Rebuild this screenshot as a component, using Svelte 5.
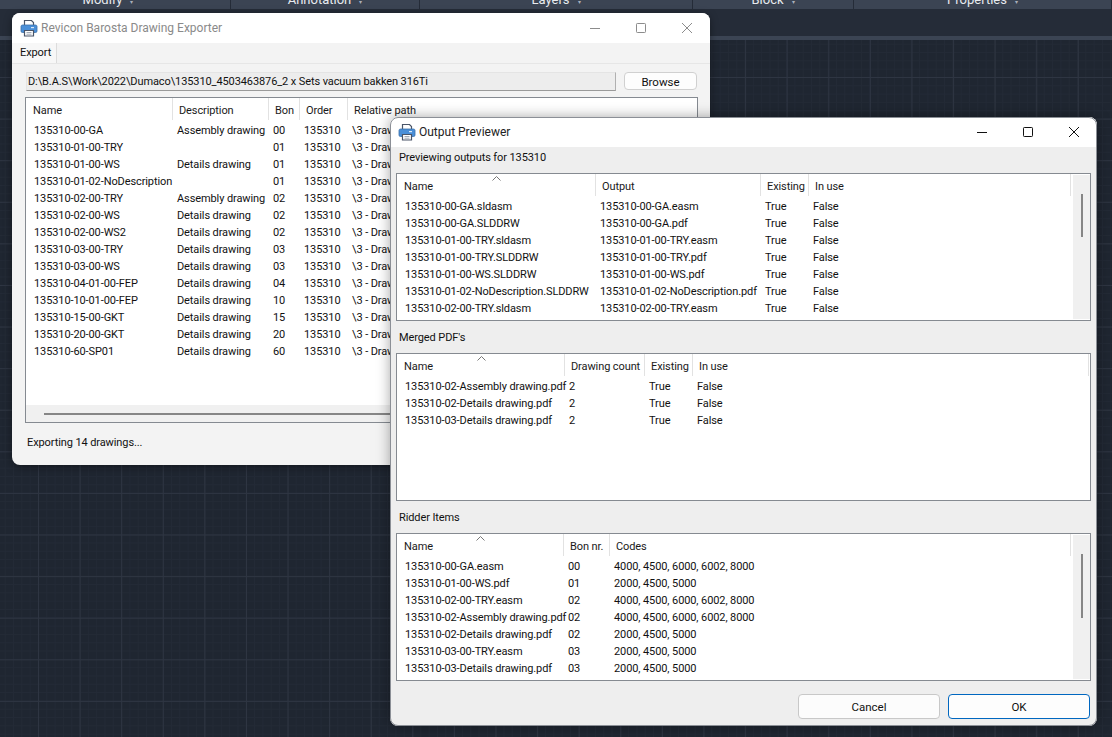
<script lang="ts">
  type Col = { title: string; width: number };

  const exportCols: Col[] = [
    { title: 'Name', width: 146 },
    { title: 'Description', width: 96 },
    { title: 'Bon', width: 31 },
    { title: 'Order', width: 48 },
    { title: 'Relative path', width: 420 },
  ];
  const dr = '\\3 - Drawings';
  const exportRows = [
    ['135310-00-GA', 'Assembly drawing', '00', '135310', dr],
    ['135310-01-00-TRY', '', '01', '135310', dr],
    ['135310-01-00-WS', 'Details drawing', '01', '135310', dr],
    ['135310-01-02-NoDescription', '', '01', '135310', dr],
    ['135310-02-00-TRY', 'Assembly drawing', '02', '135310', dr],
    ['135310-02-00-WS', 'Details drawing', '02', '135310', dr],
    ['135310-02-00-WS2', 'Details drawing', '02', '135310', dr],
    ['135310-03-00-TRY', 'Details drawing', '03', '135310', dr],
    ['135310-03-00-WS', 'Details drawing', '03', '135310', dr],
    ['135310-04-01-00-FEP', 'Details drawing', '04', '135310', dr],
    ['135310-10-01-00-FEP', 'Details drawing', '10', '135310', dr],
    ['135310-15-00-GKT', 'Details drawing', '15', '135310', dr],
    ['135310-20-00-GKT', 'Details drawing', '20', '135310', dr],
    ['135310-60-SP01', 'Details drawing', '60', '135310', dr],
  ];

  const outputCols: Col[] = [
    { title: 'Name', width: 198 },
    { title: 'Output', width: 165 },
    { title: 'Existing', width: 48 },
    { title: 'In use', width: 263 },
  ];
  const outputRows = [
    ['135310-00-GA.sldasm', '135310-00-GA.easm', 'True', 'False'],
    ['135310-00-GA.SLDDRW', '135310-00-GA.pdf', 'True', 'False'],
    ['135310-01-00-TRY.sldasm', '135310-01-00-TRY.easm', 'True', 'False'],
    ['135310-01-00-TRY.SLDDRW', '135310-01-00-TRY.pdf', 'True', 'False'],
    ['135310-01-00-WS.SLDDRW', '135310-01-00-WS.pdf', 'True', 'False'],
    ['135310-01-02-NoDescription.SLDDRW', '135310-01-02-NoDescription.pdf', 'True', 'False'],
    ['135310-02-00-TRY.sldasm', '135310-02-00-TRY.easm', 'True', 'False'],
  ];

  const mergedCols: Col[] = [
    { title: 'Name', width: 167 },
    { title: 'Drawing count', width: 80 },
    { title: 'Existing', width: 48 },
    { title: 'In use', width: 397 },
  ];
  const mergedRows = [
    ['135310-02-Assembly drawing.pdf', '2', 'True', 'False'],
    ['135310-02-Details drawing.pdf', '2', 'True', 'False'],
    ['135310-03-Details drawing.pdf', '2', 'True', 'False'],
  ];

  const ridderCols: Col[] = [
    { title: 'Name', width: 166 },
    { title: 'Bon nr.', width: 46 },
    { title: 'Codes', width: 462 },
  ];
  const ridderRows = [
    ['135310-00-GA.easm', '00', '4000, 4500, 6000, 6002, 8000'],
    ['135310-01-00-WS.pdf', '01', '2000, 4500, 5000'],
    ['135310-02-00-TRY.easm', '02', '4000, 4500, 6000, 6002, 8000'],
    ['135310-02-Assembly drawing.pdf', '02', '4000, 4500, 6000, 6002, 8000'],
    ['135310-02-Details drawing.pdf', '02', '2000, 4500, 5000'],
    ['135310-03-00-TRY.easm', '03', '2000, 4500, 5000'],
    ['135310-03-Details drawing.pdf', '03', '2000, 4500, 5000'],
  ];

  const ribbon = [
    { label: 'Modify', width: 231 },
    { label: 'Annotation', width: 189 },
    { label: 'Layers', width: 273 },
    { label: 'Block', width: 161 },
    { label: 'Properties', width: 258 },
  ];

  const template = (cols: Col[]) => cols.map((c) => c.width + 'px').join(' ');
</script>

{#snippet printer()}
  <svg class="app-icon" width="18" height="18" viewBox="0 0 18 18">
    <path d="M4.5 6V1.5h7l2 2V6" fill="#fff" stroke="#4a5568" stroke-width="1.2" />
    <rect x="1" y="6" width="16" height="7.5" rx="1.5" fill="#4a8fd8" stroke="#3b6ea8" stroke-width="0.8" />
    <rect x="11" y="8" width="3" height="1.2" fill="#dbe9f7" />
    <path d="M4.5 11.5h9v5.5h-9z" fill="#fff" stroke="#4a5568" stroke-width="1.2" />
    <path d="M6.5 13.5h5M6.5 15.2h5" stroke="#8a94a3" stroke-width="0.8" />
  </svg>
{/snippet}

{#snippet winButtons(dim)}
  <div class="win-buttons" class:dim>
    <svg width="12" height="12" viewBox="0 0 12 12"><path d="M1 6.5h10" stroke="currentColor" /></svg>
    <svg width="12" height="12" viewBox="0 0 12 12"><rect x="1.5" y="1.5" width="9" height="9" rx="0.8" fill="none" stroke="currentColor" /></svg>
    <svg width="12" height="12" viewBox="0 0 12 12"><path d="M1 1l10 10M11 1L1 11" stroke="currentColor" /></svg>
  </div>
{/snippet}

{#snippet table(cols, rows, thumb)}
  <div class="list">
    <div class="list-main">
      <div class="head" style="grid-template-columns: {template(cols)}">
        {#each cols as col (col.title)}
          <div class="head-cell">{col.title}</div>
        {/each}
        <svg class="sort" style="left: {cols[0].width / 2 - 4}px" width="9" height="5" viewBox="0 0 9 5"><path d="M0.5 4.5l4-4 4 4" fill="none" stroke="#777" /></svg>
      </div>
      <div class="rows">
        {#each rows as row, i (i)}
          <div class="row" style="grid-template-columns: {template(cols)}">
            {#each row as cell, j (j)}
              <div class="cell">{cell}</div>
            {/each}
          </div>
        {/each}
      </div>
    </div>
    {#if thumb}
      <div class="vscroll"><div class="vthumb" style="height: {thumb.h}px; margin-top: {thumb.t}px"></div></div>
    {/if}
  </div>
{/snippet}

<div class="desktop">
  <div class="ribbon">
    {#each ribbon as r (r.label)}
      <div class="ribbon-panel" style="width: {r.width}px">{r.label}<span class="caret">▾</span></div>
    {/each}
  </div>
  <div class="ribbon-gap"></div>
  <div class="ribbon-edge"></div>
  <div class="canvas"></div>

  <section class="win exporter">
    <header class="titlebar">
      {@render printer()}
      <span class="title dim-title">Revicon Barosta Drawing Exporter</span>
      {@render winButtons(true)}
    </header>
    <div class="tabstrip"><div class="tab">Export</div></div>
    <div class="panel">
      <div class="path-row">
        <div class="path">D:\B.A.S\Work\2022\Dumaco\135310_4503463876_2 x Sets vacuum bakken 316Ti</div>
        <button class="browse">Browse</button>
      </div>
      <div class="list export-list">
        <div class="list-main">
          <div class="head" style="grid-template-columns: {template(exportCols)}">
            {#each exportCols as col (col.title)}
              <div class="head-cell">{col.title}</div>
            {/each}
          </div>
          <div class="rows">
            {#each exportRows as row, i (i)}
              <div class="row" style="grid-template-columns: {template(exportCols)}">
                {#each row as cell, j (j)}
                  <div class="cell">{cell}</div>
                {/each}
              </div>
            {/each}
          </div>
          <div class="hscroll"><div class="hthumb"></div></div>
        </div>
      </div>
      <div class="status">Exporting 14 drawings...</div>
    </div>
  </section>

  <section class="win previewer">
    <header class="titlebar">
      {@render printer()}
      <span class="title">Output Previewer</span>
      {@render winButtons(false)}
    </header>
    <div class="preview-body">
      <div class="caption">Previewing outputs for 135310</div>
      {@render table(outputCols, outputRows, { h: 43, t: 19 })}
      <div class="caption">Merged PDF's</div>
      {@render table(mergedCols, mergedRows, null)}
      <div class="caption">Ridder Items</div>
      {@render table(ridderCols, ridderRows, { h: 64, t: 19 })}
      <div class="actions">
        <button class="action">Cancel</button>
        <button class="action primary">OK</button>
      </div>
    </div>
  </section>
</div>

<style>
  :global(body) {
    margin: 0;
  }

  .desktop {
    position: relative;
    width: 1112px;
    height: 737px;
    overflow: hidden;
    background: #252c38;
    display: flex;
    flex-direction: column;
    font-family: Roboto, 'Noto Sans', sans-serif;
    font-size: 11px;
    letter-spacing: -0.1px;
    color: #111;
  }

  .ribbon {
    height: 9px;
    flex: none;
    background: #3b4453;
    display: flex;
    overflow: hidden;
  }

  .ribbon-panel {
    box-sizing: border-box;
    height: 9px;
    border-right: 1px solid #252c38;
    color: #e8ebef;
    font-size: 13px;
    letter-spacing: 0;
    line-height: 0;
    text-align: center;
  }

  .ribbon-panel:first-child {
    padding-right: 14px;
  }

  .caret {
    margin-left: 8px;
    font-size: 6px;
    color: #aab0ba;
  }

  .ribbon-gap {
    height: 27px;
    flex: none;
    background: #252c38;
  }

  .ribbon-edge {
    height: 4px;
    flex: none;
    background: #3b4453;
  }

  .canvas {
    flex: 1;
    background-color: #1f2631;
    background-image:
      linear-gradient(#2e3542 1px, transparent 1px),
      linear-gradient(90deg, #2e3542 1px, transparent 1px),
      linear-gradient(#232a36 1px, transparent 1px),
      linear-gradient(90deg, #232a36 1px, transparent 1px);
    background-size: 41.6px 41.6px, 41.6px 41.6px, 8.32px 8.32px, 8.32px 8.32px;
    background-position: 38px 37px, 38px 37px, 38px 37px, 38px 37px;
  }

  .win {
    position: absolute;
    box-sizing: border-box;
    background: #eeeeee;
    border-radius: 8px;
    overflow: hidden;
    display: flex;
    flex-direction: column;
  }

  .exporter {
    left: 12px;
    top: 13px;
    width: 698px;
    height: 452px;
    background: #f3f3f3;
    box-shadow: 0 2px 8px rgba(0, 0, 0, 0.4);
  }

  .previewer {
    left: 390px;
    top: 117px;
    width: 707px;
    height: 609px;
    box-shadow: 0 0 14px rgba(0, 0, 0, 0.35);
    outline: 1px solid #8b8f96;
    outline-offset: -1px;
  }

  .titlebar {
    height: 30px;
    flex: none;
    box-sizing: border-box;
    background: #fff;
    display: flex;
    align-items: center;
    padding-left: 8px;
  }

  .app-icon {
    flex: none;
  }

  .title {
    margin-left: 3px;
    font-size: 12px;
    letter-spacing: 0;
    line-height: 30px;
    height: 30px;
    color: #222;
    flex: 1;
  }

  .dim-title {
    color: #8a8a8a;
  }

  .win-buttons {
    display: flex;
    gap: 34px;
    margin-right: 17px;
    color: #111;
  }

  .win-buttons.dim {
    color: #8c8c8c;
  }

  .tabstrip {
    height: 20px;
    flex: none;
    display: flex;
    border-bottom: 1px solid #e6e6e6;
  }

  .tab {
    width: 44px;
    margin-left: 1px;
    padding-left: 7px;
    box-sizing: border-box;
    background: #f7f7f7;
    border-right: 1px solid #dcdcdc;
    line-height: 20px;
  }

  .panel {
    flex: 1;
    display: flex;
    flex-direction: column;
    padding: 8px 12px 0 13px;
  }

  .path-row {
    display: flex;
    justify-content: space-between;
    align-items: flex-start;
    height: 25px;
    padding: 0 1px;
  }

  .path {
    width: 590px;
    height: 19px;
    box-sizing: border-box;
    background: #ededed;
    border-right: 1px solid #b0b0b0;
    border-bottom: 1px solid #9a9a9a;
    border-top: 1px solid #e4e4e4;
    border-left: 1px solid #e4e4e4;
    padding-left: 1px;
    line-height: 18px;
    white-space: nowrap;
  }

  button {
    font: inherit;
    font-size: 11.5px;
    letter-spacing: 0;
    color: #111;
    cursor: default;
  }

  .browse {
    width: 73px;
    height: 18px;
    padding: 1px 0 0;
    border: 1px solid #d0d0d0;
    border-radius: 4px;
    background: #fdfdfd;
  }

  .list {
    box-sizing: border-box;
    height: 148px;
    flex: none;
    background: #fff;
    border: 1px solid #858a91;
    display: flex;
    overflow: hidden;
    margin: 0 6px;
  }

  .export-list {
    height: 326px;
    margin: 0;
  }

  .list-main {
    position: relative;
    flex: 1;
    min-width: 0;
    display: flex;
    flex-direction: column;
  }

  .head {
    position: relative;
    height: 23px;
    flex: none;
    display: grid;
    align-items: start;
  }

  .head-cell {
    box-sizing: border-box;
    height: 22px;
    padding-left: 6px;
    line-height: 26px;
    border-left: 1px solid #e2e2e2;
    white-space: nowrap;
    overflow: hidden;
    color: #1a1a1a;
  }

  .head-cell:first-child {
    border-left-color: transparent;
  }

  .head-cell:last-of-type {
    border-right: 1px solid #e2e2e2;
  }

  .sort {
    position: absolute;
    top: 2px;
  }

  .rows {
    flex: 1;
    min-height: 0;
    overflow: hidden;
    padding-top: 1px;
  }

  .row {
    display: grid;
    height: 17px;
    line-height: 17px;
  }

  .cell {
    padding-left: 5px;
    white-space: nowrap;
  }

  .cell:first-child {
    padding-left: 8px;
  }

  .hscroll {
    height: 17px;
    flex: none;
    background: #f0f0f0;
    display: flex;
    align-items: center;
    padding: 0 18px;
  }

  .hthumb {
    flex: 1;
    height: 2px;
    background: #868686;
  }

  .vscroll {
    width: 17px;
    flex: none;
    background: #f0f0f0;
    display: flex;
    justify-content: center;
    margin: 1px 0;
  }

  .vthumb {
    width: 2px;
    background: #868686;
  }

  .status {
    padding-top: 13px;
    padding-left: 2px;
  }

  .preview-body {
    flex: 1;
    display: flex;
    flex-direction: column;
  }

  .caption {
    height: 20px;
    line-height: 22px;
    margin-bottom: 6px;
    flex: none;
    padding-left: 9px;
    color: #111;
  }

  .list + .caption {
    margin-top: 6px;
  }

  .actions {
    display: flex;
    justify-content: flex-end;
    gap: 8px;
    padding: 13px 7px 0 0;
  }

  .action {
    width: 142px;
    height: 25px;
    padding: 0;
    border: 1px solid #c8c8c8;
    border-radius: 4px;
    background: #fcfcfc;
  }

  .action.primary {
    border: 1px solid #0067c0;
    background: #fdfdfd;
  }
</style>
